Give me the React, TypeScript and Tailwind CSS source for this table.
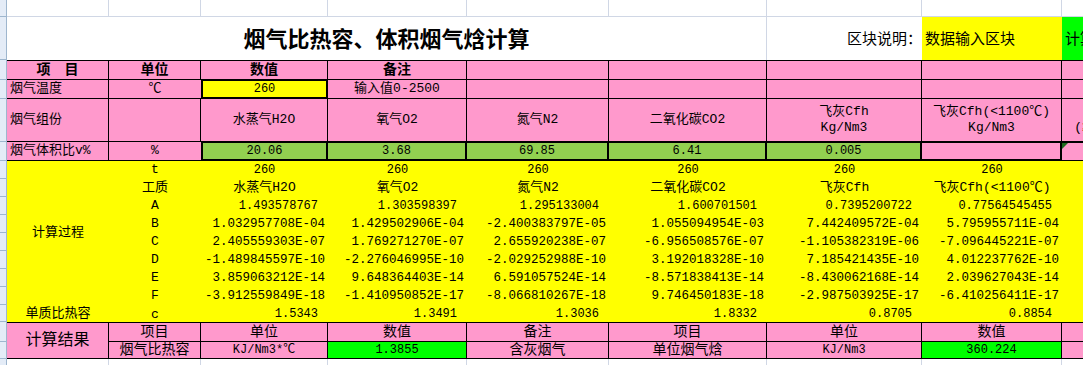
import React from "react";

const FONT = "font-['Liberation_Mono','Noto_Sans_CJK_SC',monospace]";
const PINK = "bg-[#ff99cc]";
const YEL = "bg-[#ffff00]";
const GRN = "bg-[#92d050]";
const LIME = "bg-[#00ff00]";
const GRID = "border-[#d0d7e5]";

function Cell({ cls = "", children }: { cls?: string; children?: React.ReactNode }) {
  return (
    <div className={`flex items-center overflow-hidden whitespace-nowrap text-black ${cls}`}>
      {children}
    </div>
  );
}

function Strip() {
  return <div className="bg-[#e4ecf7] border-r border-b border-[#9eb6ce]" />;
}

const names = ["水蒸气H2O", "氧气O2", "氮气N2", "二氧化碳CO2", "飞灰Cfh", "飞灰Cfh(<1100℃)"];

const calc: { label: string; vals: string[] }[] = [
  { label: "A", vals: ["1.493578767", "1.303598397", "1.295133004", "1.600701501", "0.7395200722", "0.77564545455"] },
  { label: "B", vals: ["1.032957708E-04", "1.429502906E-04", "-2.400383797E-05", "1.055094954E-03", "7.442409572E-04", "5.795955711E-04"] },
  { label: "C", vals: ["2.405559303E-07", "1.769271270E-07", "2.655920238E-07", "-6.956508576E-07", "-1.105382319E-06", "-7.096445221E-07"] },
  { label: "D", vals: ["-1.489845597E-10", "-2.276046995E-10", "-2.029252988E-10", "3.192018328E-10", "7.185421435E-10", "4.012237762E-10"] },
  { label: "E", vals: ["3.859063212E-14", "9.648364403E-14", "6.591057524E-14", "-8.571838413E-14", "-8.430062168E-14", "2.039627043E-14"] },
  { label: "F", vals: ["-3.912559849E-18", "-1.410950852E-17", "-8.066810267E-18", "9.746450183E-18", "-2.987503925E-17", "-6.410256411E-17"] },
];

const cvals = ["1.5343", "1.3491", "1.3036", "1.8332", "0.8705", "0.8854"];

export default function App() {
  const y = `${YEL}`;
  return (
    <div className={`w-[1083px] h-[365px] overflow-hidden bg-white ${FONT}`}>
      <div className="grid w-[1202px] grid-cols-[7px_102px_92px_127px_139px_142px_158px_155px_140px_140px] grid-rows-[17px_43px_20px_19px_43px_19px_18px_18px_18px_18px_18px_18px_18px_18px_17px_20px_17px_20px]">
        {/* Row 1 */}
        <Strip />
        {Array.from({ length: 9 }).map((_, i) => (
          <div key={"r1" + i} className={`border-r border-b ${GRID}`} />
        ))}

        {/* Title row */}
        <Strip />
        <Cell cls={`col-span-6 justify-center pt-[5px] border-r ${GRID}`}>
          <span className="text-[22px] font-bold">烟气比热容、体积烟气焓计算</span>
        </Cell>
        <Cell cls="justify-end pt-[6px] text-[15px]">区块说明：</Cell>
        <Cell cls={`${YEL} pl-[3px] pt-[6px] text-[15px]`}>数据输入区块</Cell>
        <Cell cls={`${LIME} pl-[3px] pt-[6px] text-[15px]`}>计算结果区块</Cell>

        {/* Header row */}
        <Strip />
        {["项　目", "单位", "数值", "备注", "", "", "", "", ""].map((t, i) => (
          <Cell key={"h" + i} cls={`${PINK} justify-center border-t border-r border-b border-black text-[14px] font-bold`}>
            {t}
          </Cell>
        ))}

        {/* Temperature row */}
        <Strip />
        <Cell cls={`${PINK} pl-[3px] border-r border-b border-black text-[13px]`}>烟气温度</Cell>
        <Cell cls={`${PINK} justify-center border-b border-black text-[13px]`}>℃</Cell>
        <Cell cls={`${YEL} justify-center border-t border-l-2 border-r-2 border-b-2 border-black text-[12px]`}>260</Cell>
        <Cell cls={`${PINK} justify-center border-r border-b border-black text-[13px]`}>输入值0-2500</Cell>
        {[0, 1, 2, 3, 4].map((i) => (
          <Cell key={"tp" + i} cls={`${PINK} border-r border-b border-black`} />
        ))}

        {/* Composition row */}
        <Strip />
        <Cell cls={`${PINK} pl-[3px] border-r border-b border-black text-[13px]`}>烟气组份</Cell>
        <Cell cls={`${PINK} border-r border-b border-black`} />
        {["水蒸气H2O", "氧气O2", "氮气N2", "二氧化碳CO2"].map((t) => (
          <Cell key={t} cls={`${PINK} justify-center border-r border-b border-black text-[13px]`}>
            {t}
          </Cell>
        ))}
        <Cell cls={`${PINK} flex-col justify-center border-r border-b border-black text-[13px] leading-[16px]`}>
          <span>飞灰Cfh</span>
          <span>Kg/Nm3</span>
        </Cell>
        <Cell cls={`${PINK} flex-col justify-center border-r border-b border-black text-[13px] leading-[16px]`}>
          <span>飞灰Cfh(&lt;1100℃)</span>
          <span>Kg/Nm3</span>
        </Cell>
        <Cell cls={`${PINK} flex-col justify-center border-r border-b border-black text-[13px] leading-[16px]`}>
          <span>飞灰Cfh</span>
          <span>(≥1100℃)Kg/Nm3</span>
        </Cell>

        {/* Volume ratio row */}
        <Strip />
        <Cell cls={`${PINK} pl-[3px] border-r border-b border-black text-[13px]`}>烟气体积比v%</Cell>
        <Cell cls={`${PINK} justify-center border-b border-black text-[13px]`}>%</Cell>
        <Cell cls={`${GRN} justify-center border-t border-l-2 border-r-2 border-b-2 border-black text-[12px]`}>20.06</Cell>
        {["3.68", "69.85", "6.41", "0.005"].map((t) => (
          <Cell key={t} cls={`${GRN} justify-center border-t border-r-2 border-b-2 border-black text-[12px]`}>
            {t}
          </Cell>
        ))}
        <Cell cls={`${PINK} border-t border-r-2 border-b-2 border-black`} />
        <div className={`${PINK} relative border-t border-b border-black`}>
          <div className="absolute left-0 top-0 h-0 w-0 border-t-[6px] border-r-[6px] border-t-[#1e6b1e] border-r-transparent" />
        </div>

        {/* Yellow calc block: row t */}
        <Strip />
        <Cell cls={`${y} row-span-8 justify-center text-[13px]`}>计算过程</Cell>
        <Cell cls={`${y} justify-center text-[13px]`}>t</Cell>
        {[0, 1, 2, 3, 4, 5].map((i) => (
          <Cell key={"t" + i} cls={`${y} justify-center text-[12px]`}>260</Cell>
        ))}
        <div className={y} />

        {/* row 工质 */}
        <Strip />
        <Cell cls={`${y} justify-center text-[13px]`}>工质</Cell>
        {names.map((t) => (
          <Cell key={"n" + t} cls={`${y} justify-center text-[13px]`}>
            {t}
          </Cell>
        ))}
        <div className={y} />

        {calc.map((r) => (
          <React.Fragment key={r.label}>
            <Strip />
            <Cell cls={`${y} justify-center text-[13px]`}>{r.label}</Cell>
            {r.vals.map((v, i) => (
              <Cell
                key={r.label + i}
                cls={`${y} justify-end ${v.includes("E") ? "pr-[3px] text-[12.5px]" : "pr-[10px] text-[12px]"}`}
              >
                {v}
              </Cell>
            ))}
            <div className={y} />
          </React.Fragment>
        ))}

        {/* row c */}
        <Strip />
        <Cell cls={`${y} justify-center text-[13px]`}>单质比热容</Cell>
        <Cell cls={`${y} justify-center pt-[3px] text-[13px]`}>c</Cell>
        {cvals.map((v) => (
          <Cell key={"c" + v} cls={`${y} justify-end pr-[10px] text-[12px]`}>
            {v}
          </Cell>
        ))}
        <div className={y} />

        {/* Result row 1 */}
        <Strip />
        <Cell cls={`${PINK} row-span-2 justify-center border-t border-r border-b border-black text-[16px]`}>计算结果</Cell>
        {["项目", "单位", "数值", "备注", "项目", "单位", "数值", ""].map((t, i) => (
          <Cell key={"rr" + i} cls={`${PINK} justify-center border-t border-r border-b border-black text-[14px]`}>
            {t}
          </Cell>
        ))}

        {/* Result row 2 */}
        <Strip />
        <Cell cls={`${PINK} justify-center border-r border-b border-black text-[14px]`}>烟气比热容</Cell>
        <Cell cls={`${PINK} justify-center border-r border-b border-black text-[12px]`}>KJ/Nm3*℃</Cell>
        <Cell cls={`${LIME} justify-center border-r border-b border-black text-[12px]`}>1.3855</Cell>
        <Cell cls={`${PINK} justify-center border-r border-b border-black text-[14px]`}>含灰烟气</Cell>
        <Cell cls={`${PINK} justify-center border-r border-b border-black text-[14px]`}>单位烟气焓</Cell>
        <Cell cls={`${PINK} justify-center border-r border-b border-black text-[12px]`}>KJ/Nm3</Cell>
        <Cell cls={`${LIME} justify-center border-r border-b border-black text-[12px]`}>360.224</Cell>
        <Cell cls={`${PINK} border-r border-b border-black`} />

        {/* Bottom empty row */}
        <Strip />
        {Array.from({ length: 9 }).map((_, i) => (
          <div key={"rb" + i} className={`border-r border-b ${GRID}`} />
        ))}
      </div>
    </div>
  );
}
